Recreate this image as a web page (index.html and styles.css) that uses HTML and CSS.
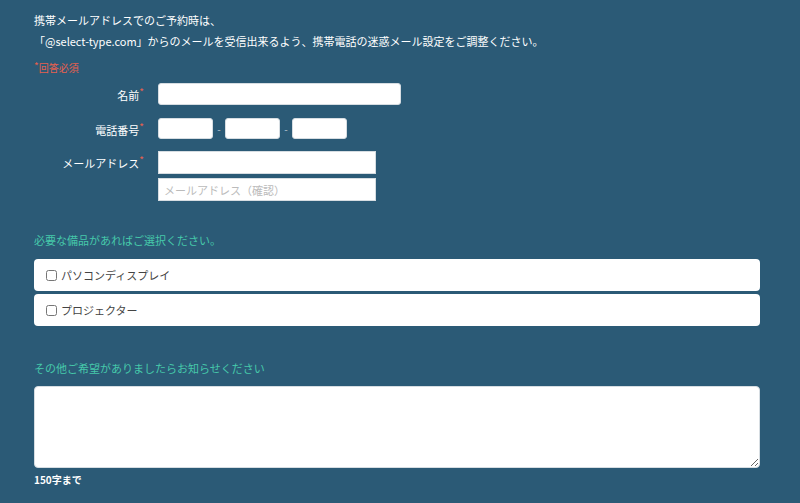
FILE: index.html
```html
<!DOCTYPE html>
<html lang="ja">
<head>
    <meta charset="UTF-8">
    <title>予約フォーム</title>
    <link rel="stylesheet" href="styles.css">
</head>
<body>
    <div class="form-wrap">
        <p class="notice">携帯メールアドレスでのご予約時は、<br>「@select-type.com」からのメールを受信出来るよう、携帯電話の迷惑メール設定をご調整ください。</p>

        <p class="req-note"><span class="mark">*</span>回答必須</p>

        <div class="field-row">
            <label class="field-label">名前<span class="mark">*</span></label>
            <input type="text" class="input name-input">
        </div>
        <div class="field-row">
            <label class="field-label">電話番号<span class="mark">*</span></label>
            <div class="tel-group">
                <input type="text" class="input tel-input">
                <span class="dash">-</span>
                <input type="text" class="input tel-input">
                <span class="dash">-</span>
                <input type="text" class="input tel-input">
            </div>
        </div>
        <div class="field-row mail-row">
            <label class="field-label">メールアドレス<span class="mark">*</span></label>
            <div class="mail-group">
                <input type="text" class="input mail-input">
                <input type="text" class="input mail-input" placeholder="メールアドレス（確認）">
            </div>
        </div>

        <h3 class="section-title">必要な備品があればご選択ください。</h3>
        <ul class="option-list">
            <li class="option-item"><label><input type="checkbox"> パソコンディスプレイ</label></li>
            <li class="option-item"><label><input type="checkbox"> プロジェクター</label></li>
        </ul>

        <h3 class="section-title other-title">その他ご希望がありましたらお知らせください</h3>
        <textarea class="comment-box"></textarea>
        <p class="limit">150字まで</p>
    </div>
</body>
</html>
```

FILE: styles.css
```css
* {
    box-sizing: border-box;
    margin: 0;
    padding: 0;
}

body {
    font-family: "Noto Sans CJK JP", "Liberation Sans", sans-serif;
    background: #2b5a76;
    color: #fff;
    font-size: 11px;
}

.form-wrap {
    padding: 10px 40px 0 34px;
}

.notice {
    line-height: 21px;
    font-size: 11px;
}

.req-note {
    margin-top: 9px;
    font-size: 10px;
    color: #e8604e;
    line-height: 14px;
}

.mark {
    color: #e8604e;
    font-size: 10px;
    vertical-align: top;
    line-height: 1;
}

.field-row {
    display: flex;
    align-items: flex-start;
    margin-top: 13px;
}

.req-note + .field-row {
    margin-top: 8px;
}

.mail-row {
    margin-top: 12px;
}

.field-label {
    width: 110px;
    text-align: right;
    padding-top: 4px;
    line-height: 16px;
    margin-right: 14px;
}

.input {
    height: 22px;
    border: 1px solid #d6dde2;
    border-radius: 3px;
    background: #fff;
    padding: 0 5px;
    font-family: inherit;
    font-size: 11px;
}

.input::placeholder {
    color: #bbb;
}

.name-input {
    width: 243px;
}

.tel-group {
    display: flex;
    align-items: center;
}

.tel-input {
    width: 55px;
    height: 21px;
}

.dash {
    width: 12px;
    text-align: center;
    font-size: 10px;
    color: #b8c8d2;
}

.mail-group {
    display: flex;
    flex-direction: column;
    gap: 4px;
}

.mail-input {
    width: 218px;
    height: 23px;
    border-radius: 0;
}

.section-title {
    margin-top: 32px;
    font-size: 11px;
    font-weight: normal;
    color: #46c9aa;
    line-height: 14px;
}

.option-list {
    list-style: none;
    margin-top: 12px;
    width: 726px;
}

.option-item {
    background: #fff;
    border-radius: 4px;
    height: 32px;
    margin-bottom: 3px;
    display: flex;
    align-items: center;
    padding-left: 12px;
    color: #444;
    font-size: 11px;
}

.option-item label {
    display: flex;
    align-items: center;
    gap: 4px;
}

.option-item input {
    width: 11px;
    height: 11px;
    margin: 0;
}

.other-title {
    margin-top: 35px;
}

.comment-box {
    display: block;
    margin-top: 11px;
    width: 726px;
    height: 82px;
    border: 1px solid #d6dde2;
    border-radius: 4px;
    background: #fff;
}

.limit {
    margin-top: 5px;
    font-size: 10px;
    font-weight: bold;
    line-height: 14px;
}
```
